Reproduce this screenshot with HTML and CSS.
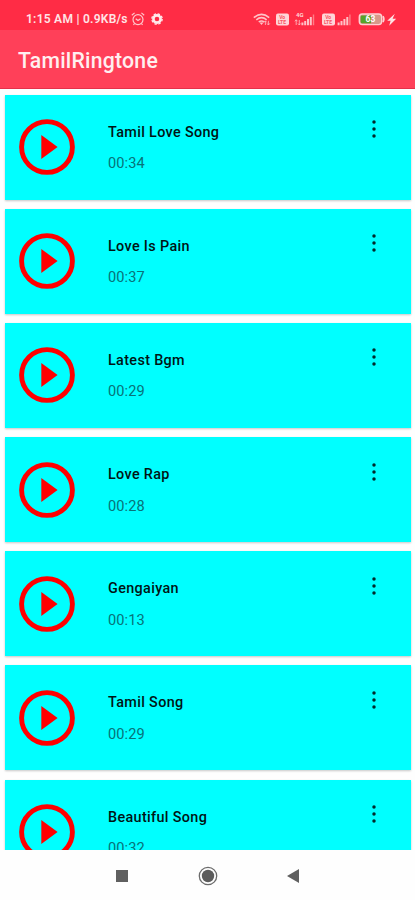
FILE: index.html
```
<!DOCTYPE html>
<html lang="en">
<head>
<meta charset="utf-8">
<title>TamilRingtone</title>
<link rel="stylesheet" href="styles.css">
</head>
<body>
<svg class="defs" width="0" height="0" aria-hidden="true">
  <symbol id="play" viewBox="0 0 56 56"><circle cx="28" cy="28" r="25.4" fill="none" stroke="#f00" stroke-width="4.9"/><path d="M22.3 16v24L38.6 28z" fill="#f00"/></symbol>
  <symbol id="more" viewBox="0 0 6 20"><circle cx="3" cy="3" r="1.75"/><circle cx="3" cy="10" r="1.75"/><circle cx="3" cy="17" r="1.75"/></symbol>
</svg>
<div class="screen">
  <header class="status">
    <span class="clock">1:15 AM | 0.9KB/s</span>
    <svg class="alarm" width="14" height="14" viewBox="0 0 14 14" fill="none" stroke="#ffc9cd" stroke-width="1.2"><circle cx="7" cy="7.6" r="5"/><path d="M.8 3.2 3.6.9M13.2 3.2 10.4.9M4.7 6.7 7 8.5l2.5-1.8M3.5 11.5l-1 1.5M10.5 11.5l1 1.5"/></svg>
    <svg class="gear" width="12" height="12" viewBox="0 0 12 12"><circle cx="6" cy="6" r="3.6" fill="none" stroke="#ffe9ea" stroke-width="2.6"/><circle cx="6" cy="6" r="5.2" fill="none" stroke="#ffe9ea" stroke-width="1.3" stroke-dasharray="2.4 1.684"/></svg>
    <svg class="signals" width="146" height="18" viewBox="0 0 146 18">
      <g fill="none" stroke="#ffc2c7" stroke-width="1.5"><path d="M.8 7.6q7.7-6.5 15.4 0M3.3 9.8q5.2-4.3 10.4 0M5.7 12q2.8-2.2 5.6 0"/></g>
      <path d="M6.5 12.5h4l-2 2.6z" fill="#ffc2c7"/><path d="M12.4 15v-4m-1.4 1.4 1.4-1.6 1.4 1.6M15.4 10.8v4m-1.4-1.4 1.4 1.6 1.4-1.6" fill="none" stroke="#ffc2c7" stroke-width=".8"/>
      <g fill="#ffd5d8"><rect x="23" y="3.4" width="13" height="12" rx="2"/><rect x="69" y="3.4" width="13" height="12" rx="2"/></g>
      <g class="volte"><text x="26.2" y="9">Vo</text><text x="24.9" y="14">LTE</text><text x="72.2" y="9">Vo</text><text x="70.9" y="14">LTE</text></g>
      <text class="fourg" x="43" y="7.4">4G</text>
      <path d="M43.2 15V9.8m-1.3 1.5 1.3-1.5 1.3 1.5M46.3 10v5m-1.3-1.5 1.3 1.5 1.3-1.5" fill="none" stroke="#ffc2c7" stroke-width=".8"/>
      <g fill="#ffc2c7"><path d="M48.4 12.6h2v2.7h-2zM51.2 11h2v4.3h-2zM54 8.9h2v6.4h-2zM56.8 6.9h2v8.4h-2z"/><path d="M84.6 12.6h2v2.7h-2zM87.5 11h2v4.3h-2zM90.4 8.9h2v6.4h-2zM93.3 6.9h2v8.4h-2z"/></g>
      <g fill="#ff7d86"><path d="M59.8 4.5h1.4v10.8h-1.4zM96.2 4.5h1.4v10.8h-1.4z"/></g>
      <rect x="106.3" y="4" width="22.4" height="10.6" rx="3" fill="#d8998b" stroke="#ffd0d3" stroke-width="1.4"/><path d="M130 6.2q1.8 3 0 6" fill="none" stroke="#ffd0d3" stroke-width="1.6"/><path d="M109 5.4h9v7.8h-9q-1.3 0-1.3-1.3V6.7q0-1.3 1.3-1.3z" fill="#56a329"/>
      <text class="charge" x="112.6" y="12.3">63</text>
      <path d="M141.8 3.7 134.2 10.7h3.4l-1.4 5 7-7h-3.6z" fill="#ffe1e3"/>
    </svg>
  </header>
  <div class="appbar"><h1>TamilRingtone</h1></div>
  <main class="list">
    <article class="card"><svg class="play"><use href="#play"/></svg><div class="info"><h2>Tamil Love Song</h2><p>00:34</p></div><svg class="more"><use href="#more"/></svg></article>
    <article class="card"><svg class="play"><use href="#play"/></svg><div class="info"><h2>Love Is Pain</h2><p>00:37</p></div><svg class="more"><use href="#more"/></svg></article>
    <article class="card"><svg class="play"><use href="#play"/></svg><div class="info"><h2>Latest Bgm</h2><p>00:29</p></div><svg class="more"><use href="#more"/></svg></article>
    <article class="card"><svg class="play"><use href="#play"/></svg><div class="info"><h2>Love Rap</h2><p>00:28</p></div><svg class="more"><use href="#more"/></svg></article>
    <article class="card"><svg class="play"><use href="#play"/></svg><div class="info"><h2>Gengaiyan</h2><p>00:13</p></div><svg class="more"><use href="#more"/></svg></article>
    <article class="card"><svg class="play"><use href="#play"/></svg><div class="info"><h2>Tamil Song</h2><p>00:29</p></div><svg class="more"><use href="#more"/></svg></article>
    <article class="card"><svg class="play"><use href="#play"/></svg><div class="info"><h2>Beautiful Song</h2><p>00:32</p></div><svg class="more"><use href="#more"/></svg></article>
  </main>
  <nav class="navbar">
    <svg width="12" height="12" viewBox="0 0 12 12"><path d="M0 0h12v12H0z" fill="#606060"/></svg>
    <svg width="20" height="20" viewBox="0 0 20 20"><circle cx="10" cy="10" r="6.2" fill="#5c5c5c"/><circle cx="10" cy="10" r="8.7" fill="none" stroke="#6c6c6c" stroke-width="1.3"/></svg>
    <svg width="12" height="14" viewBox="0 0 12 14"><path d="M12 0v14L0 7z" fill="#606060"/></svg>
  </nav>
</div>
</body>
</html>
```
FILE: styles.css
```
* { box-sizing: border-box; }
body { margin: 0; font-family: Roboto, "Liberation Sans", sans-serif; background: #fefefe; }
h1, h2, p { margin: 0; }
svg { display: block; flex: none; }
.defs { position: absolute; }
.screen { width: 415px; height: 900px; display: flex; flex-direction: column; overflow: hidden; }
.status { height: 30px; flex: none; display: flex; align-items: center; padding: 8px 0 0 26px; background: #ff2c45; }
.clock { width: 104px; font-size: 12px; line-height: 22px; font-weight: 600; letter-spacing: .26px; white-space: nowrap; color: #ffe4e6; }
.alarm { margin-left: 1px; }
.gear { margin-left: 6px; }
.signals { margin-left: 90px; }
.volte { font-size: 5px; font-weight: 700; fill: #f95362; }
.fourg { font-size: 6px; font-weight: 700; fill: #ffd5d8; }
.charge { font-size: 8.5px; font-weight: 700; fill: #fff; }
.appbar { height: 58.5px; flex: none; display: flex; align-items: center; padding: 5px 18px 0; background: #ff4059; border-bottom: 1.5px solid #e5304a; }
.appbar h1 { font-size: 21.2px; line-height: 28px; font-weight: 500; letter-spacing: .25px; color: #ffeff0; }
.list { flex: 1; min-height: 0; overflow: hidden; display: flex; flex-direction: column; gap: 9.2px; padding: 6px 4px 0 5px; }
.card { height: 105px; flex: none; display: flex; align-items: flex-start; background: #0ff; box-shadow: 0 1px 2px rgba(0, 0, 0, .22); }
.play { width: 56px; height: 56px; margin: 24.5px 0 0 14px; }
.info { width: 250px; margin: 28px 0 0 33px; }
.info h2 { font-size: 14.4px; line-height: 20px; font-weight: 500; letter-spacing: .34px; color: #001414; }
.info p { margin-top: 10.5px; font-size: 14.6px; line-height: 20px; color: #087278; letter-spacing: .1px; }
.more { width: 6px; height: 20px; margin: 24.5px 0 0 13px; fill: #002a2c; }
.navbar { height: 50px; flex: none; display: flex; align-items: center; padding: 1px 0 0 116px; background: #fefefe; }
.navbar svg:nth-child(2) { margin-left: 70px; }
.navbar svg:nth-child(3) { margin-left: 69px; }
```
